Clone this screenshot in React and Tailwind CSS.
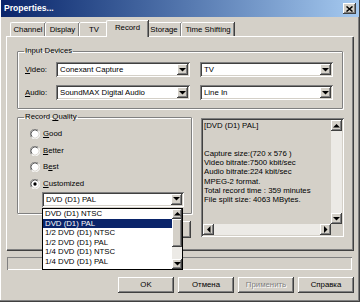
import React from "react";

const RAISED = "shadow-[inset_-1px_-1px_#404040,inset_1px_1px_#ffffff,inset_-2px_-2px_#808080,inset_2px_2px_#d4d0c8]";
const SUNKEN = "shadow-[inset_1px_1px_#808080,inset_-1px_-1px_#ffffff,inset_2px_2px_#404040,inset_-2px_-2px_#d4d0c8]";

function Tri({ dir = "down" }) {
  const pts = {
    down: "0,0 7,0 3.5,3.5",
    up: "0,3.5 7,3.5 3.5,0",
    left: "3.5,0 3.5,7 0,3.5",
    right: "0,0 0,7 3.5,3.5",
  }[dir];
  const side = dir === "left" || dir === "right";
  return (
    <svg width={side ? 4 : 7} height={side ? 7 : 4} viewBox={side ? "0 0 4 7" : "0 0 7 4"}>
      <polygon points={pts} fill="#000" />
    </svg>
  );
}

function ArrowBtn({ dir = "down", cls = "w-[11px] h-full" }) {
  return (
    <div className={`flex items-center justify-center bg-[#d4d0c8] ${RAISED} ${cls}`}>
      <Tri dir={dir} />
    </div>
  );
}

function Combo({ w, text }) {
  return (
    <div className={`flex h-[15px] ${w} bg-white p-[2px] ${SUNKEN}`}>
      <div className="flex-1 pl-[2px] leading-[11px] whitespace-nowrap overflow-hidden">{text}</div>
      <ArrowBtn />
    </div>
  );
}

function Radio({ checked }) {
  return (
    <svg width="10" height="10" viewBox="0 0 12 12">
      <circle cx="6" cy="6" r="5.5" fill="#ffffff" />
      <path d="M1.8 10.2 A5.5 5.5 0 0 1 10.2 1.8" fill="none" stroke="#808080" strokeWidth="1" />
      <path d="M2.6 9.4 A4.5 4.5 0 0 1 9.4 2.6" fill="none" stroke="#404040" strokeWidth="1" />
      <path d="M10.2 1.8 A5.5 5.5 0 0 1 1.8 10.2" fill="none" stroke="#ffffff" strokeWidth="1" />
      <path d="M9.4 2.6 A4.5 4.5 0 0 1 2.6 9.4" fill="none" stroke="#d4d0c8" strokeWidth="1" />
      {checked && <circle cx="6" cy="6" r="2" fill="#000" />}
    </svg>
  );
}

function Tab({ label, w, selected }) {
  if (selected) {
    return (
      <div className={`relative z-10 -mb-[1px] -mx-[2px] h-[17px] ${w} bg-[#d4d0c8] border-t border-l border-white rounded-tl-[2px] shadow-[inset_-1px_0_#808080,1px_0_#404040] flex items-center justify-center pb-[2px]`}>
        {label}
      </div>
    );
  }
  return (
    <div className={`h-[14px] ${w} bg-[#d4d0c8] border-t border-l border-white rounded-tl-[2px] shadow-[inset_-1px_0_#808080,1px_0_#404040] flex items-center justify-center`}>
      {label}
    </div>
  );
}

function Btn({ children, disabled }) {
  return (
    <div className={`w-[56px] h-[16px] flex items-center justify-center bg-[#d4d0c8] ${RAISED} ${disabled ? "text-[#808080] [text-shadow:1px_1px_#ffffff]" : ""}`}>
      {children}
    </div>
  );
}

const items = [
  "DVD (D1) NTSC",
  "DVD (D1) PAL",
  "1/2 DVD (D1) NTSC",
  "1/2 DVD (D1) PAL",
  "1/4 DVD (D1) NTSC",
  "1/4 DVD (D1) PAL",
];

export default function App() {
  return (
    <div
      className="relative w-[360px] h-[302px] overflow-hidden bg-[#d4d0c8] text-black text-[7.8px] shadow-[inset_-1px_-1px_#404040,inset_-2px_-2px_#808080,inset_1px_0_#ffffff]"
      style={{ fontFamily: '"Liberation Sans", Arial, sans-serif' }}
    >
      {/* Title bar */}
      <div className="mx-[1px] h-[17px] flex items-center justify-between pl-[3px] pr-[3px] bg-gradient-to-r from-[#0a246a] to-[#a6caf0]">
        <span className="text-white font-bold text-[8.6px]">Properties...</span>
        <div className={`w-[13px] h-[11px] flex items-center justify-center bg-[#d4d0c8] ${RAISED}`}>
          <svg width="7" height="6" viewBox="0 0 7 6">
            <path d="M0.5 0.5 L6.5 5.5 M6.5 0.5 L0.5 5.5" stroke="#000" strokeWidth="1.5" />
          </svg>
        </div>
      </div>

      {/* Tabs */}
      <div className="mt-[3px] h-[16px] pl-[10px] flex items-end">
        <Tab label="Channel" w="w-[35px]" />
        <Tab label="Display" w="w-[34px]" />
        <Tab label="TV" w="w-[29px]" />
        <Tab label="Record" w="w-[42px]" selected />
        <Tab label="Storage" w="w-[35px]" />
        <Tab label="Time Shifting" w="w-[53px]" />
      </div>

      {/* Tab panel */}
      <div className="ml-[6px] w-[347px] h-[214px] border-t border-l border-white shadow-[inset_-1px_-1px_#808080,1px_1px_#404040] pl-[10px] pt-[9px]">
        {/* Input devices */}
        <fieldset className="w-[326px] border border-[#808080] shadow-[1px_1px_#ffffff,inset_1px_1px_#ffffff] rounded-[1px] pl-[7px] pr-[8px] pb-[8px] pt-[6px]">
          <legend className="-ml-[1px] px-[1px] leading-[10px]">Input Devices</legend>
          <div className="flex flex-col gap-[8px]">
            <div className="flex items-center">
              <span className="w-[31px]"><u>V</u>ideo:</span>
              <Combo w="w-[134px]" text="Conexant Capture" />
              <div className="w-[10px]" />
              <Combo w="w-[133px]" text="TV" />
            </div>
            <div className="flex items-center">
              <span className="w-[31px]"><u>A</u>udio:</span>
              <Combo w="w-[134px]" text="SoundMAX Digital Audio" />
              <div className="w-[10px]" />
              <Combo w="w-[133px]" text="Line In" />
            </div>
          </div>
        </fieldset>

        <div className="mt-[3px] flex">
          <div className="flex flex-col">
            <fieldset className="w-[175px] border border-[#808080] shadow-[1px_1px_#ffffff,inset_1px_1px_#ffffff] rounded-[1px] pl-[12px] pb-[6px] pt-[7px]">
              <legend className="-ml-[6px] px-[1px] leading-[10px]">Record <u>Q</u>uality</legend>
              <div className="flex flex-col">
                {[["G", "ood"], ["B", "etter"], ["B", "est", true], ["C", "ustomized"]].map(([a, b, alt], i) => (
                  <div key={i} className="h-[16.7px] flex items-start gap-[3px]">
                    <Radio checked={i === 3} />
                    <span className="leading-[10px]">
                      {alt ? (<>B<u>e</u>st</>) : (<><u>{a}</u>{b}</>)}
                    </span>
                  </div>
                ))}
              </div>
              <div className="ml-[12px] -mt-[4px]">
                <Combo w="w-[142px]" text="DVD (D1) PAL" />
              </div>
            </fieldset>
            <div className="mt-[7px] ml-[103px] w-[71px] h-[17px] bg-[#d4d0c8] shadow-[inset_-1px_-1px_#404040,inset_1px_1px_#ffffff,inset_-2px_-2px_#808080]" />
          </div>

          {/* Info box */}
          <div className={`ml-[9px] mt-[6px] w-[143px] h-[119px] p-[2px] flex flex-col ${SUNKEN}`}>
            <div className="flex flex-1 min-h-0">
              <div className="flex-1 pl-[1px] pt-[1px] leading-[9.3px] whitespace-nowrap overflow-hidden">
                <div>[DVD (D1) PAL]</div>
                <div>&nbsp;</div>
                <div>&nbsp;</div>
                <div>Capture size:(720 x 576 )</div>
                <div>Video bitrate:7500 kbit/sec</div>
                <div>Audio bitrate:224 kbit/sec</div>
                <div>MPEG-2 format.</div>
                <div>Total record time : 359 minutes</div>
                <div>File split size: 4063 MBytes.</div>
              </div>
              <div className="w-[11px] flex flex-col bg-[#eceae6]">
                <ArrowBtn dir="up" cls="w-[11px] h-[11px]" />
                <div className="flex-1" />
                <ArrowBtn dir="down" cls="w-[11px] h-[11px]" />
              </div>
            </div>
            <div className="h-[11px] flex">
              <div className="flex-1 flex bg-[#eceae6]">
                <ArrowBtn dir="left" cls="w-[11px] h-[11px]" />
                <div className="flex-1" />
                <ArrowBtn dir="right" cls="w-[11px] h-[11px]" />
              </div>
              <div className="w-[11px] bg-[#d4d0c8]" />
            </div>
          </div>
        </div>
      </div>

      {/* Status field */}
      <div className="mt-[7px] ml-[7px] w-[345px] h-[13px] shadow-[inset_1px_1px_#808080,inset_-1px_-1px_#ffffff]" />

      {/* Buttons */}
      <div className="mt-[7px] flex justify-end gap-[4px] pr-[6px]">
        <Btn>OK</Btn>
        <Btn>Отмена</Btn>
        <Btn disabled>Применить</Btn>
        <Btn>Справка</Btn>
      </div>

      {/* Drop-down list (overlay) */}
      <div className="absolute left-[42px] top-[208px] z-20 w-[141px] h-[62px] bg-white border border-black flex">
        <div className="flex-1 flex flex-col">
          {items.map((t, i) => (
            <div
              key={t}
              className={`h-[9.6px] leading-[9.6px] pl-[2px] whitespace-nowrap ${i === 1 ? "bg-[#0a246a] text-white" : ""}`}
            >
              {t}
            </div>
          ))}
        </div>
        <div className="w-[10px] flex flex-col bg-[#eceae6]">
          <ArrowBtn dir="up" cls="w-[10px] h-[10px]" />
          <div className={`h-[28px] bg-[#d4d0c8] ${RAISED}`} />
          <div className="flex-1" />
          <ArrowBtn dir="down" cls="w-[10px] h-[10px]" />
        </div>
      </div>
    </div>
  );
}
